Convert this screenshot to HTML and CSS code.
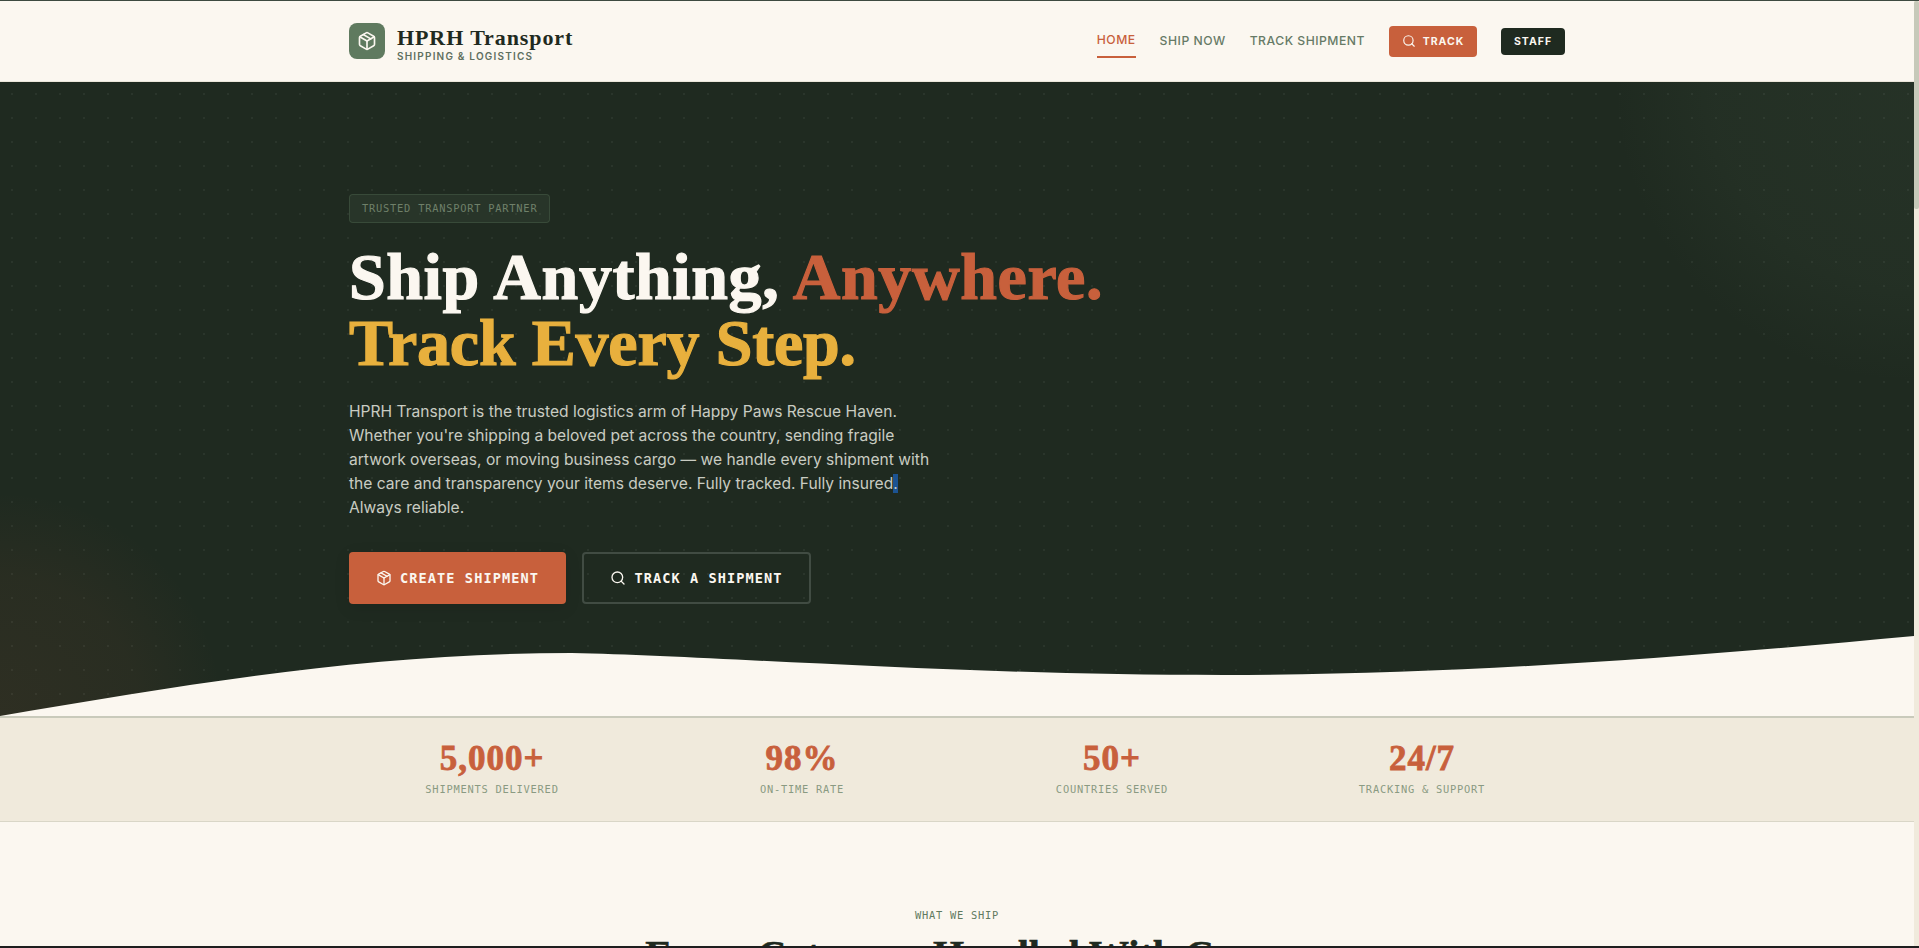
FILE: index.html
```html
<!DOCTYPE html>
<html lang="en">
  <head>
    <meta charset="UTF-8" />
    <meta name="viewport" content="width=device-width, initial-scale=1.0" />
    <title>HPRH Transport</title>
    <link rel="stylesheet" href="styles.css">
  </head>
  <body>
    <div class="frame-top"></div>
    <div class="frame-middle">
      <div class="page-scroll">
        <header class="site-header">
          <div class="container header-inner">
            <a class="brand" href="#">
              <span class="brand-icon">
                <svg width="20" height="20" viewBox="0 0 24 24" fill="none" stroke="currentColor" stroke-width="2" stroke-linecap="round" stroke-linejoin="round">
                  <path d="M11 21.73a2 2 0 0 0 2 0l7-4A2 2 0 0 0 21 16V8a2 2 0 0 0-1-1.73l-7-4a2 2 0 0 0-2 0l-7 4A2 2 0 0 0 3 8v8a2 2 0 0 0 1 1.73z" />
                  <path d="M12 22V12" />
                  <path d="m3.3 7 8.7 5 8.7-5" />
                  <path d="m7.5 4.27 9 5.15" />
                </svg>
              </span>
              <span class="brand-text">
                <span class="brand-name">HPRH Transport</span>
                <span class="brand-sub">SHIPPING &amp; LOGISTICS</span>
              </span>
            </a>
            <nav class="main-nav">
              <a class="nav-link active" href="#">HOME</a>
              <a class="nav-link" href="#">SHIP NOW</a>
              <a class="nav-link" href="#">TRACK SHIPMENT</a>
              <a class="nav-track" href="#">
                <svg width="14" height="14" viewBox="0 0 24 24" fill="none" stroke="currentColor" stroke-width="2" stroke-linecap="round" stroke-linejoin="round">
                  <circle cx="11" cy="11" r="8" />
                  <path d="m21 21-4.3-4.3" />
                </svg>
                TRACK
              </a>
              <a class="nav-staff" href="#">STAFF</a>
            </nav>
          </div>
        </header>

        <section class="hero">
          <div class="container hero-inner">
            <div class="hero-badge">TRUSTED TRANSPORT PARTNER</div>
            <h1 class="hero-title">Ship Anything, <span class="accent-red">Anywhere.</span><br /><span class="accent-gold">Track Every Step.</span></h1>
            <p class="hero-text">HPRH Transport is the trusted logistics arm of Happy Paws Rescue Haven.<br />Whether you're shipping a beloved pet across the country, sending fragile<br />artwork overseas, or moving business cargo — we handle every shipment with<br />the care and transparency your items deserve. Fully tracked. Fully insured<span class="text-selected">.</span><br />Always reliable.</p>
            <div class="hero-actions">
              <a class="btn btn-primary" href="#">
                <svg width="16" height="16" viewBox="0 0 24 24" fill="none" stroke="currentColor" stroke-width="2" stroke-linecap="round" stroke-linejoin="round">
                  <path d="M11 21.73a2 2 0 0 0 2 0l7-4A2 2 0 0 0 21 16V8a2 2 0 0 0-1-1.73l-7-4a2 2 0 0 0-2 0l-7 4A2 2 0 0 0 3 8v8a2 2 0 0 0 1 1.73z" />
                  <path d="M12 22V12" />
                  <path d="m3.3 7 8.7 5 8.7-5" />
                  <path d="m7.5 4.27 9 5.15" />
                </svg>
                CREATE SHIPMENT
              </a>
              <a class="btn btn-outline" href="#">
                <svg width="16" height="16" viewBox="0 0 24 24" fill="none" stroke="currentColor" stroke-width="2" stroke-linecap="round" stroke-linejoin="round">
                  <circle cx="11" cy="11" r="8" />
                  <path d="m21 21-4.3-4.3" />
                </svg>
                TRACK A SHIPMENT
              </a>
            </div>
          </div>
          <svg class="hero-wave" viewBox="0 0 1440 80" preserveAspectRatio="none">
            <path d="M0,80 C140,48 280,17 430,17 C540,20 720,39 920,39 C1100,39 1280,20 1440,0 L1440,80 Z" />
          </svg>
        </section>

        <section class="stats">
          <div class="container stats-grid">
            <div class="stat">
              <div class="stat-value">5,000+</div>
              <div class="stat-label">SHIPMENTS DELIVERED</div>
            </div>
            <div class="stat">
              <div class="stat-value">98%</div>
              <div class="stat-label">ON-TIME RATE</div>
            </div>
            <div class="stat">
              <div class="stat-value">50+</div>
              <div class="stat-label">COUNTRIES SERVED</div>
            </div>
            <div class="stat">
              <div class="stat-value">24/7</div>
              <div class="stat-label">TRACKING &amp; SUPPORT</div>
            </div>
          </div>
        </section>

        <section class="services">
          <div class="section-label">WHAT WE SHIP</div>
          <h2 class="section-title">Every Category, Handled With Care</h2>
        </section>
      </div>
      <div class="scrollbar"><div class="scrollbar-thumb"></div></div>
    </div>
    <div class="frame-bottom"></div>
  </body>
</html>
```

FILE: styles.css
```css
html,
body {
  height: 100%;
  margin: 0;
}
body {
  display: flex;
  flex-direction: column;
  overflow: hidden;
  background-color: #fbf7f0;
  color: #1f2a20;
  font-family: Inter, "Liberation Sans", sans-serif;
}
a {
  color: inherit;
  text-decoration: none;
}
.frame-top {
  height: 1px;
  background-color: #3d4a40;
}
.frame-bottom {
  height: 2px;
  background-color: #1e1e1e;
}
.frame-middle {
  flex: 1;
  min-height: 0;
  display: flex;
}
.page-scroll {
  flex: 1;
  min-width: 0;
  overflow: hidden;
}
.scrollbar {
  width: 5px;
  background-color: #f0eadc;
}
.scrollbar-thumb {
  height: 208px;
  background-color: #c6c9b9;
  border-radius: 2px;
}
.container {
  max-width: 1216px;
  margin: 0 auto;
}

/* header */
.site-header {
  border-bottom: 1px solid #ebe6da;
}
.header-inner {
  height: 80px;
  display: flex;
  align-items: center;
  justify-content: space-between;
}
.brand {
  display: flex;
  align-items: center;
  gap: 12px;
}
.brand-icon {
  width: 36px;
  height: 36px;
  border-radius: 8px;
  background-color: #5f7a5f;
  color: #fbf7f0;
  display: flex;
  align-items: center;
  justify-content: center;
}
.brand-text {
  display: flex;
  flex-direction: column;
  padding-top: 8px;
}
.brand-name {
  font-family: "Liberation Serif", serif;
  font-weight: 700;
  font-size: 22px;
  line-height: 22px;
  letter-spacing: 0.9px;
}
.brand-sub {
  font-size: 10px;
  font-weight: 600;
  line-height: 14px;
  letter-spacing: 1.2px;
  color: #5f6f5f;
}
.main-nav {
  display: flex;
  align-items: center;
  gap: 24px;
}
.nav-link {
  padding: 8px 0;
  font-size: 12.2px;
  line-height: 16px;
  font-weight: 500;
  letter-spacing: 0.5px;
  color: #667a66;
}
.nav-link.active {
  color: #c8603c;
  border-bottom: 2px solid #c8603c;
}
.nav-track {
  height: 31px;
  width: 88px;
  box-sizing: border-box;
  display: flex;
  align-items: center;
  justify-content: center;
  gap: 7px;
  border-radius: 4px;
  background-color: #c8603c;
  color: #fbf7f0;
  font-size: 10.5px;
  font-weight: 700;
  letter-spacing: 1px;
}
.nav-staff {
  height: 27px;
  width: 64px;
  display: flex;
  align-items: center;
  justify-content: center;
  border-radius: 4px;
  background-color: #1f2a20;
  color: #fbf7f0;
  font-size: 10.5px;
  font-weight: 700;
  letter-spacing: 1px;
}

/* hero */
.hero {
  position: relative;
  background-color: #1f2a20;
  background-image:
    radial-gradient(circle, rgba(255, 255, 255, 0.05) 1px, transparent 1.5px),
    radial-gradient(circle 400px at 100% 0, rgba(95, 122, 95, 0.1), rgba(95, 122, 95, 0.07) 50%, transparent 75%),
    radial-gradient(circle 280px at 0 100%, rgba(200, 96, 60, 0.09), rgba(200, 96, 60, 0.06) 50%, transparent 80%);
  background-size: 24px 24px, auto, auto;
}
.hero-inner {
  padding: 112px 0;
}
.hero-badge {
  width: fit-content;
  padding: 7px 12px;
  font-family: "DejaVu Sans Mono", monospace;
  font-size: 10.4px;
  line-height: 13px;
  letter-spacing: 0.76px;
  color: #6f8069;
  background-color: rgba(95, 122, 95, 0.15);
  border: 1px solid rgba(95, 122, 95, 0.3);
  border-radius: 4px;
}
.hero-title {
  margin: 21px 0 24px;
  font-family: "Liberation Serif", serif;
  font-weight: 700;
  font-size: 66px;
  line-height: 66px;
  letter-spacing: 0.6px;
  color: #fbf7f0;
  -webkit-text-stroke: 1.2px currentColor;
}
.accent-red {
  color: #c8603c;
}
.accent-gold {
  color: #e8b03d;
  letter-spacing: -0.2px;
}
.hero-text {
  margin: 0 0 32px;
  font-size: 15.6px;
  line-height: 24px;
  color: #c9ccc2;
}
.text-selected {
  background-color: #1c5391;
}
.hero-actions {
  display: flex;
  gap: 16px;
}
.btn {
  height: 52px;
  box-sizing: border-box;
  display: flex;
  align-items: center;
  justify-content: center;
  gap: 8px;
  border-radius: 4px;
  font-family: "DejaVu Sans Mono", monospace;
  font-weight: 700;
  font-size: 13.6px;
  letter-spacing: 1.08px;
  color: #fbf7f0;
}
.btn-primary {
  width: 217px;
  background-color: #c8603c;
  box-shadow: 0 4px 16px rgba(0, 0, 0, 0.1);
}
.btn-outline {
  width: 229px;
  border: 2px solid #414c43;
}
.hero-wave {
  position: absolute;
  left: 0;
  bottom: 0;
  display: block;
  width: 100%;
  height: 80px;
  fill: #fbf7f0;
}

/* stats */
.stats {
  height: 106px;
  box-sizing: border-box;
  background-color: #f0eadc;
  border-top: 2px solid #c9cabb;
  border-bottom: 1px solid #d9d6c7;
}
.stats-grid {
  display: grid;
  grid-template-columns: repeat(4, 1fr);
  gap: 24px;
  padding-top: 22px;
}
.stat {
  text-align: center;
}
.stat-value {
  font-family: "Liberation Serif", serif;
  font-weight: 700;
  font-size: 35px;
  line-height: 38px;
  letter-spacing: 1px;
  color: #c8603c;
  -webkit-text-stroke: 0.8px currentColor;
}
.stat-label {
  margin-top: 4px;
  font-family: "DejaVu Sans Mono", monospace;
  font-size: 10.4px;
  line-height: 14px;
  letter-spacing: 0.76px;
  color: #8a9a82;
}

/* services */
.services {
  padding-top: 85px;
  text-align: center;
}
.section-label {
  font-family: "DejaVu Sans Mono", monospace;
  font-size: 10.4px;
  line-height: 16px;
  letter-spacing: 0.76px;
  color: #5f7a5f;
}
.section-title {
  margin: 6px 0 0;
  font-family: "Liberation Serif", serif;
  font-weight: 700;
  font-size: 40px;
  line-height: 52px;
  color: #1f2a20;
  -webkit-text-stroke: 0.6px currentColor;
}
```
